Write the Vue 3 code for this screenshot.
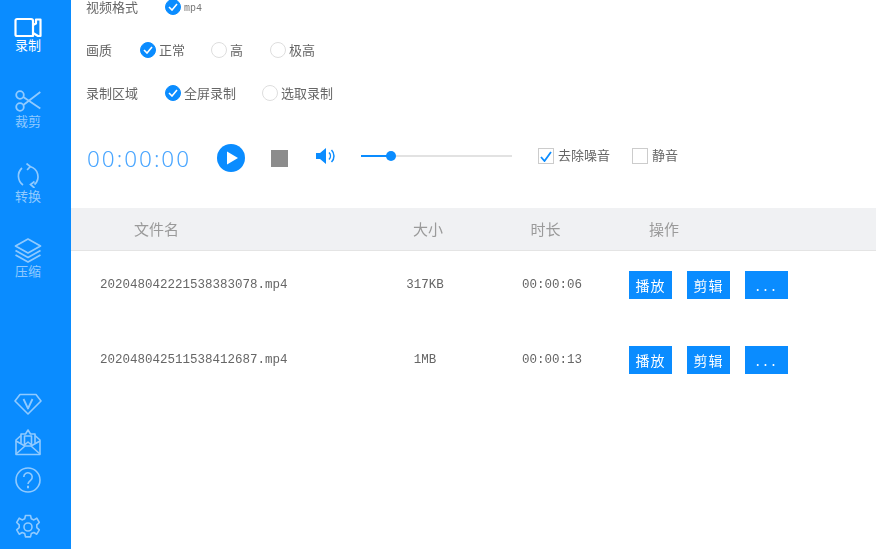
<script setup>
const rows = [
  { name: '202048042221538383078.mp4', size: '317KB', time: '00:00:06' },
  { name: '202048042511538412687.mp4', size: '1MB', time: '00:00:13' }
]
</script>

<template>
  <div class="app">
    <aside class="side">
      <nav class="nav">
        <div class="nav-item">
          <svg width="28" height="25" viewBox="0 0 28 25" fill="none" stroke="#fff" stroke-width="2.200" stroke-linejoin="round"><path d="M3 4h14a2 2 0 0 1 2 2v15H3a1.500 1.500 0 0 1-1.500-1.500v-14A1.500 1.500 0 0 1 3 4z"/><path d="M19 10l3-1.500V4.500h4.500V21H24l-5-3"/></svg>
          <span>录制</span>
        </div>
        <div class="nav-item dim">
          <svg width="28" height="25" viewBox="0 0 28 25" fill="none" stroke="currentColor" stroke-width="1.800"><circle cx="6" cy="7" r="3.800"/><circle cx="6" cy="19" r="3.800"/><path d="M9.300 9l17 11.500M9.300 17L26.300 4"/></svg>
          <span>裁剪</span>
        </div>
        <div class="nav-item dim">
          <svg width="28" height="25" viewBox="0 0 28 25" fill="none" stroke="currentColor" stroke-width="1.700"><path d="M8 5A11 11 0 0 0 9 22"/><path d="M16 3.500a10.500 10.500 0 0 1 4.500 18"/><path d="M12.500 .5l3.800 3-3.200 3.500"/><path d="M20.500 25l-4-3.500 4-3"/></svg>
          <span>转换</span>
        </div>
        <div class="nav-item dim">
          <svg width="28" height="25" viewBox="0 0 28 25" fill="none" stroke="currentColor" stroke-width="1.700" stroke-linejoin="round"><path d="M14 1l12.500 7L14 15 1.500 8z"/><path d="M1.500 12.500l12.500 7 12.500-7"/><path d="M1.500 17l12.500 7 12.500-7"/></svg>
          <span>压缩</span>
        </div>
      </nav>
      <div class="tools">
        <svg class="t-gem" width="28" height="24" viewBox="0 0 28 24" fill="none" stroke="currentColor" stroke-width="1.600" stroke-linejoin="round"><path d="M6 2.500h16l5 6.500-13 13L1 9z"/><path d="M9.500 7l4.500 9.500L18.500 7" stroke-width="1.800"/></svg>
        <svg class="t-mail" width="28" height="28" viewBox="0 0 28 28" fill="none" stroke="currentColor" stroke-width="1.600" stroke-linejoin="round"><path d="M7 7.500L2 12v14.500h24V12l-5-4.500"/><path d="M2 26l9-8h6l9 8"/><path d="M2 13l9 5M26 13l-9 5"/><path d="M7 15V6h4.500L14 2l2.500 4H21v9"/><path d="M10.500 8h7v9l-3.500-3-3.500 3z"/></svg>
        <svg class="t-help" width="26" height="26" viewBox="0 0 26 26" fill="none" stroke="currentColor" stroke-width="1.600"><circle cx="13" cy="13" r="12"/><path d="M8.800 10a4.200 4.200 0 1 1 6.900 3.200c-1.600 1.300-2.700 2-2.700 3.800"/><path d="M13 18.800v2.400" stroke-width="2"/></svg>
        <svg class="t-gear" width="26" height="26" viewBox="0 0 26 26" fill="none" stroke="currentColor" stroke-width="1.600" stroke-linejoin="round"><circle cx="13" cy="13" r="4"/><path d="M10.500 1.500h5l.8 3.300 2.600 1.100 2.900-1.700 2.500 4.300-2.500 2.300v2.800l2.500 2.300-2.500 4.300-2.900-1.700-2.600 1.100-.8 3.300h-5l-.8-3.300-2.600-1.100-2.900 1.700-2.500-4.300 2.500-2.300v-2.800L1.700 8.500l2.500-4.300 2.900 1.700 2.600-1.100z"/></svg>
      </div>
    </aside>

    <main class="main">
      <section class="options">
        <div class="opt">
          <span class="opt-label">视频格式</span>
          <span class="radio on"><svg width="10" height="8" viewBox="0 0 10 8" fill="none" stroke="#fff" stroke-width="1.600"><path d="M1 4l3 3 5-6"/></svg></span>
          <span class="small">mp4</span>
        </div>
        <div class="opt">
          <span class="opt-label short">画质</span>
          <span class="radio on"><svg width="10" height="8" viewBox="0 0 10 8" fill="none" stroke="#fff" stroke-width="1.600"><path d="M1 4l3 3 5-6"/></svg></span>
          <span class="val w1">正常</span>
          <span class="radio"></span>
          <span class="val w2">高</span>
          <span class="radio"></span>
          <span class="val">极高</span>
        </div>
        <div class="opt">
          <span class="opt-label">录制区域</span>
          <span class="radio on"><svg width="10" height="8" viewBox="0 0 10 8" fill="none" stroke="#fff" stroke-width="1.600"><path d="M1 4l3 3 5-6"/></svg></span>
          <span class="val w3">全屏录制</span>
          <span class="radio"></span>
          <span class="val">选取录制</span>
        </div>
      </section>

      <section class="player">
        <span class="clock low">00:00:00</span>
        <svg class="play low" width="28" height="28" viewBox="0 0 28 28"><circle cx="14" cy="14" r="14" fill="#0a8cff"/><path d="M10 7.500l11 6.500-11 6.500z" fill="#fff"/></svg>
        <span class="stop low"></span>
        <svg class="vol" width="22" height="18" viewBox="0 0 22 18" fill="none"><path d="M1 6h4l6-5v16l-6-5H1z" fill="#0a8cff"/><path d="M14 5.500a5 5 0 0 1 0 7M16.500 3a8.500 8.500 0 0 1 0 12" stroke="#0a8cff" stroke-width="1.500"/></svg>
        <div class="slider"><span class="fill"></span><span class="knob"></span></div>
        <span class="check on"><svg width="12" height="11" viewBox="0 0 12 11" fill="none" stroke="#0a8cff" stroke-width="1.800"><path d="M1 6l3.500 4L11 1"/></svg></span>
        <span class="check-label w4">去除噪音</span>
        <span class="check"></span>
        <span class="check-label">静音</span>
      </section>

      <section class="table">
        <div class="head">
          <span class="h-name">文件名</span>
          <span class="h-size">大小</span>
          <span class="h-time">时长</span>
          <span class="h-op">操作</span>
        </div>
        <div class="rows">
          <div v-for="r in rows" :key="r.name" class="row">
            <span class="f-name">{{ r.name }}</span>
            <span class="center">{{ r.size }}</span>
            <span class="center">{{ r.time }}</span>
            <span class="btns">
              <button class="btn">播放</button>
              <button class="btn">剪辑</button>
              <button class="btn dots">...</button>
            </span>
          </div>
        </div>
      </section>
    </main>
  </div>
</template>

<style>
html, body { margin: 0; background: #fff; overflow: hidden; }
</style>

<style scoped>
.app {
  display: flex;
  width: 876px;
  height: 549px;
  overflow: hidden;
  font-family: "Noto Sans CJK SC", "Noto Sans", sans-serif;
  color: #666;
  filter: blur(0.6px);
}
.side {
  width: 71px;
  box-sizing: border-box;
  padding-right: 15px;
  flex: none;
  background: #0a8cff;
  display: flex;
  flex-direction: column;
  align-items: center;
  color: #90caff;
}
.nav { display: flex; flex-direction: column; padding-top: 15px; }
.nav-item {
  height: 75px;
  display: flex;
  flex-direction: column;
  align-items: center;
  font-size: 13px;
  line-height: 14px;
  color: #fff;
}
.nav-item svg { display: block; margin-bottom: -2px; }
.nav-item.dim { color: #90caff; }
.nav-item.dim svg { margin-top: -2px; margin-bottom: 1px; }
.tools {
  margin-top: auto;
  padding-bottom: 9px;
  display: flex;
  flex-direction: column;
  align-items: center;
}
.tools svg { display: block; }
.t-mail { margin-top: 12px; }
.t-help { margin-top: 11px; }
.t-gear { margin-top: 21px; }

.main { flex: 1; min-width: 0; }
.options { display: flex; flex-direction: column; gap: 29px; padding-left: 15px; }
.opt { height: 14px; line-height: 14px; display: flex; align-items: center; font-size: 13px; color: #666; }
.opt-label { width: 79px; }
.opt-label.short { width: 54px; }
.radio {
  width: 16px;
  height: 16px;
  border-radius: 50%;
  border: 1px solid #ddd;
  box-sizing: border-box;
  display: flex;
  align-items: center;
  justify-content: center;
  margin-right: 3px;
  flex: none;
}
.radio.on { background: #0a8cff; border-color: #0a8cff; }
.small { font-family: "Liberation Mono", monospace; font-size: 10px; color: #777; margin-top: 3px; }
.val.w1 { width: 52px; }
.val.w2 { width: 40px; }
.val.w3 { width: 78px; }

.player { display: flex; align-items: center; height: 40px; margin-top: 36px; padding-left: 16px; }
.low { margin-top: 4px; }
.clock { font-family: "Noto Sans", sans-serif; font-size: 22.500px; letter-spacing: 2px; color: #4aa6ff; width: 130px; flex: none; font-weight: 300; }
.play { flex: none; }
.stop { width: 17px; height: 17px; background: #8c8c8c; margin-left: 26px; flex: none; }
.vol { margin-left: 27px; flex: none; }
.slider { position: relative; width: 151px; height: 2px; background: #e2e2e2; margin-left: 24px; flex: none; }
.fill { position: absolute; left: 0; top: 0; width: 30px; height: 2px; background: #0a8cff; }
.knob { position: absolute; left: 25px; top: -4px; width: 10px; height: 10px; border-radius: 50%; background: #0a8cff; }
.check {
  width: 16px;
  height: 16px;
  box-sizing: border-box;
  border: 1px solid #ccc;
  flex: none;
  display: flex;
  align-items: center;
  justify-content: center;
  margin-left: 26px;
}
.check-label { font-size: 13px; line-height: 14px; color: #666; margin-left: 4px; margin-bottom: 2px; }
.check-label.w4 { width: 48px; white-space: nowrap; }

.table { margin-top: 32px; }
.head {
  display: grid;
  grid-template-columns: 301px 112px 123px 1fr;
  align-items: center;
  height: 42px;
  background: #f0f1f3;
  border-bottom: 1px solid #e4e4e4;
  font-size: 15px;
  color: #9a9a9a;
}
.head span { margin-bottom: 2px; }
.h-name { padding-left: 63px; }
.h-size, .h-time { text-align: center; }
.h-op { padding-left: 42px; }
.rows { margin-top: -4px; }
.row {
  display: grid;
  grid-template-columns: 301px 106px 148px 1fr;
  align-items: center;
  height: 75px;
  font-family: "Liberation Mono", monospace;
  font-size: 12.500px;
  color: #666;
}
.f-name { padding-left: 29px; }
.center { text-align: center; }
.btns { display: flex; gap: 15px; padding-left: 3px; }
.btn {
  width: 43px;
  height: 28px;
  border: 0;
  padding: 0;
  background: #0a8cff;
  color: #fff;
  font-family: "Noto Sans CJK SC", sans-serif;
  font-size: 14px;
  letter-spacing: 1px;
}
.dots { letter-spacing: 4px; padding-left: 2px; }
</style>
